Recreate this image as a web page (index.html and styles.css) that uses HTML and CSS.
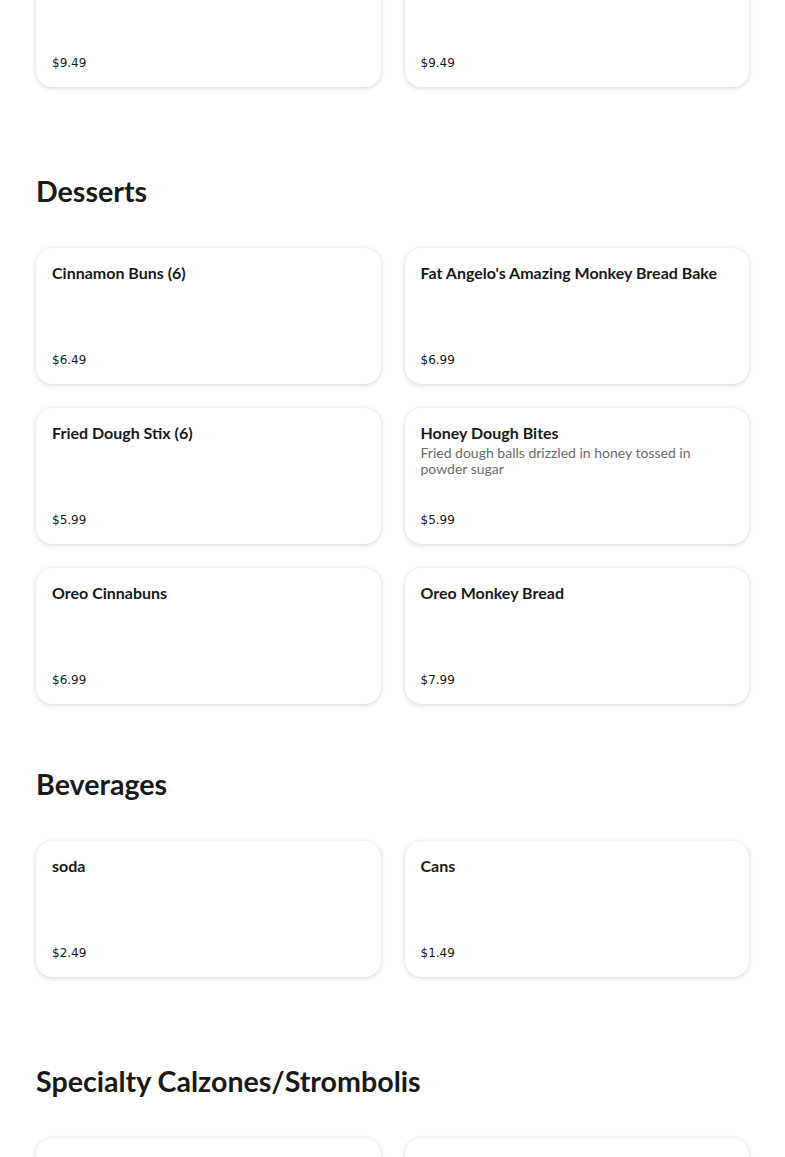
FILE: index.html
```html
<!DOCTYPE html>
<html>
<head>
<meta charset="utf-8">
<link rel="stylesheet" href="styles.css">
</head>
<body>
<main class="page">
  <section class="section section-first">
    <div class="grid">
      <div class="card"><div class="card-body"></div><div class="price">$9.49</div></div>
      <div class="card"><div class="card-body"></div><div class="price">$9.49</div></div>
    </div>
  </section>

  <section class="section">
    <h2 class="heading">Desserts</h2>
    <div class="grid">
      <div class="card"><div class="card-body"><div class="title">Cinnamon Buns (6)</div></div><div class="price">$6.49</div></div>
      <div class="card"><div class="card-body"><div class="title">Fat Angelo's Amazing Monkey Bread Bake</div></div><div class="price">$6.99</div></div>
      <div class="card"><div class="card-body"><div class="title">Fried Dough Stix (6)</div></div><div class="price">$5.99</div></div>
      <div class="card"><div class="card-body"><div class="title">Honey Dough Bites</div><div class="desc">Fried dough balls drizzled in honey tossed in powder sugar</div></div><div class="price">$5.99</div></div>
      <div class="card"><div class="card-body"><div class="title">Oreo Cinnabuns</div></div><div class="price">$6.99</div></div>
      <div class="card"><div class="card-body"><div class="title">Oreo Monkey Bread</div></div><div class="price">$7.99</div></div>
    </div>
  </section>

  <section class="section section-tight">
    <h2 class="heading">Beverages</h2>
    <div class="grid">
      <div class="card"><div class="card-body"><div class="title">soda</div></div><div class="price">$2.49</div></div>
      <div class="card"><div class="card-body"><div class="title">Cans</div></div><div class="price">$1.49</div></div>
    </div>
  </section>

  <section class="section">
    <h2 class="heading">Specialty Calzones/Strombolis</h2>
    <div class="grid">
      <div class="card"><div class="card-body"><div class="title">Stromboli</div></div><div class="price">$12.99</div></div>
      <div class="card"><div class="card-body"><div class="title">Specialty Calzone</div></div><div class="price">$12.99</div></div>
    </div>
  </section>
</main>
</body>
</html>
```
FILE: styles.css
```css
html, body {
  margin: 0;
  padding: 0;
  background: #ffffff;
}
body {
  font-family: "Lato", "Noto Sans", sans-serif;
  color: #191919;
  overflow: hidden;
}
.page {
  padding: 0 36px;
}
.section {
  padding-top: 86px;
}
.section-first {
  padding-top: 0;
  margin-top: -49px;
}
.section-tight {
  padding-top: 62px;
}
.heading {
  margin: 0 0 39px 0;
  font-size: 28.6px;
  line-height: 36px;
  font-weight: 700;
  color: #191919;
}
.grid {
  display: grid;
  grid-template-columns: 1fr 1fr;
  gap: 24px;
}
.card {
  height: 136px;
  box-sizing: border-box;
  padding: 15px 16px 15px 16px;
  border-radius: 16px;
  background: #fff;
  box-shadow: 0 1px 5px rgba(0, 0, 0, 0.16), 0 0 1px rgba(0, 0, 0, 0.06);
  display: flex;
  flex-direction: column;
}
.card-body {
  flex: 1;
}
.title {
  font-size: 16px;
  line-height: 20px;
  font-weight: 700;
  color: #191919;
}
.desc {
  margin-top: 2px;
  font-size: 14px;
  line-height: 16px;
  color: #6b6b6b;
}
.price {
  font-family: "DejaVu Sans", sans-serif;
  font-size: 12px;
  line-height: 18px;
  color: #191919;
}
```
